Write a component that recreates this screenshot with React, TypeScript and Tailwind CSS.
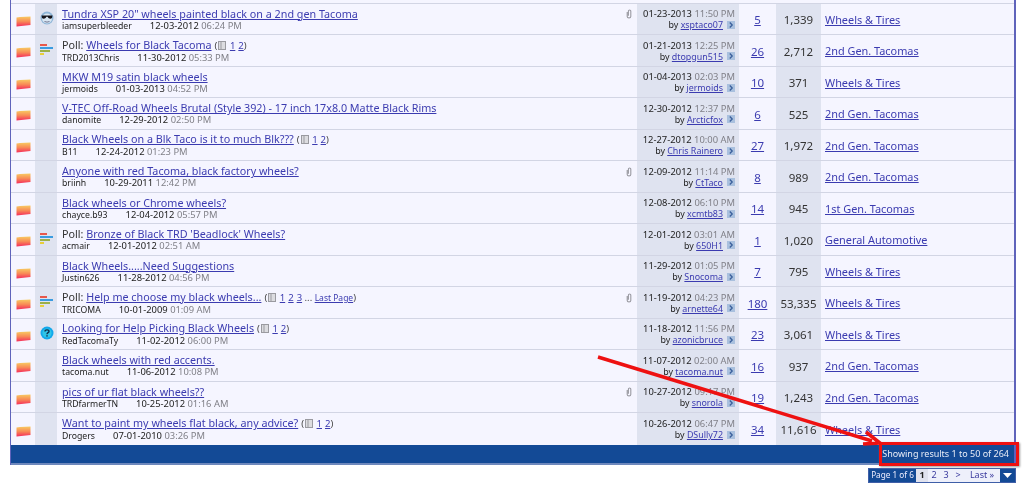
import React from "react";

type Row = {
  poll?: boolean; title: string; pages?: string[]; last?: boolean; user: string; d: string; t: string;
  clip?: boolean; ld: string; lt: string; by: string; replies: string; views: string; forum: string;
  icon?: "cool" | "poll" | "q";
};

const rows: Row[] = [
  { icon: "cool", title: 'Tundra XSP 20" wheels painted black on a 2nd gen Tacoma', user: "iamsuperbleeder", d: "12-03-2012", t: "06:24 PM", clip: true, ld: "01-23-2013", lt: "11:50 PM", by: "xsptaco07", replies: "5", views: "1,339", forum: "Wheels & Tires" },
  { icon: "poll", poll: true, title: "Wheels for Black Tacoma", pages: ["1", "2"], user: "TRD2013Chris", d: "11-30-2012", t: "05:33 PM", ld: "01-21-2013", lt: "12:25 PM", by: "dtopgun515", replies: "26", views: "2,712", forum: "2nd Gen. Tacomas" },
  { title: "MKW M19 satin black wheels", user: "jermoids", d: "01-03-2013", t: "04:52 PM", ld: "01-04-2013", lt: "02:03 PM", by: "jermoids", replies: "10", views: "371", forum: "Wheels & Tires" },
  { title: "V-TEC Off-Road Wheels Brutal (Style 392) - 17 inch 17x8.0 Matte Black Rims", user: "danomite", d: "12-29-2012", t: "02:50 PM", ld: "12-30-2012", lt: "12:37 PM", by: "Arcticfox", replies: "6", views: "525", forum: "2nd Gen. Tacomas" },
  { title: "Black Wheels on a Blk Taco is it to much Blk???", pages: ["1", "2"], user: "B11", d: "12-24-2012", t: "01:23 PM", ld: "12-27-2012", lt: "10:00 AM", by: "Chris Rainero", replies: "27", views: "1,972", forum: "2nd Gen. Tacomas" },
  { title: "Anyone with red Tacoma, black factory wheels?", user: "briinh", d: "10-29-2011", t: "12:42 PM", clip: true, ld: "12-09-2012", lt: "11:14 PM", by: "CtTaco", replies: "8", views: "989", forum: "2nd Gen. Tacomas" },
  { title: "Black wheels or Chrome wheels?", user: "chayce.b93", d: "12-04-2012", t: "05:57 PM", ld: "12-08-2012", lt: "06:10 PM", by: "xcmtb83", replies: "14", views: "945", forum: "1st Gen. Tacomas" },
  { icon: "poll", poll: true, title: "Bronze of Black TRD 'Beadlock' Wheels?", user: "acmair", d: "12-01-2012", t: "02:51 AM", ld: "12-01-2012", lt: "03:01 AM", by: "650H1", replies: "1", views: "1,020", forum: "General Automotive" },
  { title: "Black Wheels.....Need Suggestions", user: "Justin626", d: "11-28-2012", t: "04:56 PM", ld: "11-29-2012", lt: "01:05 PM", by: "Snocoma", replies: "7", views: "795", forum: "Wheels & Tires" },
  { icon: "poll", poll: true, title: "Help me choose my black wheels...", pages: ["1", "2", "3"], last: true, user: "TRICOMA", d: "10-01-2009", t: "01:09 AM", clip: true, ld: "11-19-2012", lt: "04:23 PM", by: "arnette64", replies: "180", views: "53,335", forum: "Wheels & Tires" },
  { icon: "q", title: "Looking for Help Picking Black Wheels", pages: ["1", "2"], user: "RedTacomaTy", d: "11-02-2012", t: "06:00 PM", ld: "11-18-2012", lt: "11:56 PM", by: "azonicbruce", replies: "23", views: "3,061", forum: "Wheels & Tires" },
  { title: "Black wheels with red accents.", user: "tacoma.nut", d: "11-06-2012", t: "10:08 PM", ld: "11-07-2012", lt: "02:00 AM", by: "tacoma.nut", replies: "16", views: "937", forum: "2nd Gen. Tacomas" },
  { title: "pics of ur flat black wheels??", user: "TRDfarmerTN", d: "10-25-2012", t: "01:16 AM", clip: true, ld: "10-27-2012", lt: "09:17 PM", by: "snorola", replies: "19", views: "1,243", forum: "2nd Gen. Tacomas" },
  { title: "Want to paint my wheels flat black, any advice?", pages: ["1", "2"], user: "Drogers", d: "07-01-2010", t: "03:26 PM", ld: "10-26-2012", lt: "06:47 PM", by: "DSully72", replies: "34", views: "11,616", forum: "Wheels & Tires" },
];

const linkCls = "text-[#3b3bb0] underline";

function Folder({ id }: { id: number }) {
  return (
    <svg width="15" height="11" viewBox="0 0 15 11">
      <defs>
        <linearGradient id={`f${id}`} x1="0" y1="0" x2="0" y2="1">
          <stop offset="0" stopColor="#f8cb62" />
          <stop offset="0.5" stopColor="#f88a56" />
          <stop offset="1" stopColor="#f52c5c" />
        </linearGradient>
      </defs>
      <path d="M0.5 1.5 L4 1 L14.5 0.5 L14.5 9 L0.5 10.5 Z" fill={`url(#f${id})`} />
    </svg>
  );
}

function PostIcon({ kind }: { kind?: Row["icon"] }) {
  if (kind === "poll")
    return (
      <svg width="13" height="12" viewBox="0 0 13 12">
        <rect x="0" y="0" width="7" height="2" fill="#e8584a" />
        <rect x="0" y="3" width="13" height="2" fill="#3a9be0" />
        <rect x="0" y="6" width="10" height="2" fill="#9bb04a" />
        <rect x="0" y="9" width="4" height="2" fill="#e8cf3a" />
      </svg>
    );
  if (kind === "q")
    return (
      <svg width="14" height="14" viewBox="0 0 14 14">
        <circle cx="7" cy="7" r="6.5" fill="#12a8ec" />
        <circle cx="7" cy="7" r="4.6" fill="#2fc5e8" />
        <path d="M5 5.4 C5 3.4 9 3.4 9 5.4 C9 6.8 7 6.6 7 8.2" fill="none" stroke="#103050" strokeWidth="1.4" />
        <rect x="6.3" y="9.2" width="1.4" height="1.4" fill="#103050" />
      </svg>
    );
  if (kind === "cool")
    return (
      <svg width="14" height="14" viewBox="0 0 14 14">
        <circle cx="7" cy="7" r="6.5" fill="#8fb6d8" />
        <circle cx="7" cy="7.5" r="5" fill="#d8e6f2" />
        <path d="M1.5 4.5 H12.5 L12 7 Q10.5 8.6 8.4 7 L7.6 5.8 H6.4 L5.6 7 Q3.5 8.6 2 7 Z" fill="#15151c" />
        <path d="M4.5 10.5 Q7 11.8 9.5 10.5" fill="none" stroke="#557" strokeWidth="0.8" />
      </svg>
    );
  return null;
}

function Clip() {
  return (
    <svg width="6" height="10" viewBox="0 0 6 10" className="shrink-0">
      <path d="M1.2 3 V7.6 C1.2 9.4 4.8 9.4 4.8 7.6 V2.2 C4.8 0.6 2.4 0.6 2.4 2.2 V6.8" fill="none" stroke="#9a9aa2" strokeWidth="1.1" />
    </svg>
  );
}

function GoIcon() {
  return (
    <svg width="8" height="8" viewBox="0 0 8 8" className="ml-[4px] shrink-0">
      <rect width="8" height="8" fill="#a9c0de" />
      <path d="M2.8 1.5 L5.2 4 L2.8 6.5" fill="none" stroke="#3a5f9c" strokeWidth="1.3" />
    </svg>
  );
}

function PagesIcon() {
  return (
    <svg width="8" height="9" viewBox="0 0 8 9" className="mx-px inline-block align-[-1px]">
      <rect x="0.5" y="0.5" width="7" height="8" fill="#dcdce0" stroke="#9a9aa0" />
      <path d="M3 0.5 V8.5" stroke="#9a9aa0" />
    </svg>
  );
}

function Pages({ r }: { r: Row }) {
  if (!r.pages) return null;
  return (
    <span className="ml-[3px] text-[9.5px] text-[#444]">
      (<PagesIcon />{" "}
      {r.pages.map((p, i) => (
        <span key={p} className={`${linkCls} ${i < r.pages!.length - 1 ? "mr-[3px]" : ""}`}>{p}</span>
      ))}
      {r.last && (
        <>
          {" "}... <span className={`${linkCls} text-[8.5px]`}>Last Page</span>
        </>
      )}
      )
    </span>
  );
}

function TableRow({ r, i, end }: { r: Row; i: number; end: boolean }) {
  return (
    <div className={`grid h-[31.5px] grid-cols-[24px_22px_580px_102px_37px_45px_193px] ${end ? "" : "border-b border-[#d2d5e4]"}`}>
      <div className="flex items-center justify-center bg-[#f5f5ff] pt-[5px]"><Folder id={i} /></div>
      <div className="flex items-center justify-center bg-[#dfe3f0] pb-[1px] pl-[1px]"><PostIcon kind={r.icon} /></div>
      <div className="flex items-center justify-between bg-[#f5f5ff] pl-[5px] pr-[5px]">
        <div className="pt-[2px] leading-[11px]">
          <div className="whitespace-nowrap text-[10.75px] leading-[12px] text-[#333]">
            {r.poll && "Poll: "}<span className={linkCls}>{r.title}</span><Pages r={r} />
          </div>
          <div className="flex items-baseline gap-[18px] whitespace-nowrap text-[9.4px] text-[#222]">
            <span className="text-[8.7px]">{r.user}</span>
            <span>{r.d} <span className="text-[#808088]">{r.t}</span></span>
          </div>
        </div>
        {r.clip && <div className="-mt-[9px]"><Clip /></div>}
      </div>
      <div className="flex flex-col items-end justify-center bg-[#dfe3f0] pr-[4px] pt-[1px] text-[9.4px] leading-[11px] text-[#222]">
        <div className="whitespace-nowrap">{r.ld} <span className="text-[#808088]">{r.lt}</span></div>
        <div className="flex items-center whitespace-nowrap text-[8.9px]">by&nbsp;<span className={linkCls}>{r.by}</span><GoIcon /></div>
      </div>
      <div className="flex items-center justify-center bg-[#f5f5ff] pt-[2px] text-[11.5px]"><span className={linkCls}>{r.replies}</span></div>
      <div className="flex items-center justify-center bg-[#dfe3f0] pt-[2px] text-[11.5px] text-[#333]">{r.views}</div>
      <div className="flex items-center bg-[#f5f5ff] pl-[4px] pt-[2px] text-[10.9px]"><span className={linkCls}>{r.forum}</span></div>
    </div>
  );
}

function Arrow() {
  return (
    <svg width="1023" height="491" viewBox="0 0 1023 491" className="pointer-events-none absolute left-0 top-0">
      <path d="M598 357 L872 441" stroke="#ee1111" strokeWidth="3.5" />
      <path d="M866 432 L880 443 L863 444" fill="none" stroke="#ee1111" strokeWidth="3.5" />
    </svg>
  );
}

export default function App() {
  return (
    <div className="relative h-[491px] w-[1023px] overflow-hidden bg-white font-['Noto_Sans',sans-serif] blur-[0.3px]">
      <div className="ml-[10px] w-[1006px] border-l border-r-2 border-[#5f63bb]">
        <div className="h-[3.5px] border-b border-[#d2d5e4] bg-[#f5f5ff]" />
        {rows.map((r, i) => (
          <TableRow key={i} r={r} i={i} end={i === rows.length - 1} />
        ))}
        <div className="flex h-[20px] items-center justify-end border-b-2 border-[#6e88bc] bg-[#134a96] pr-[5px] text-[9px] text-[#e8ecf6]">
          Showing results 1 to 50 of 264
        </div>
      </div>
      <div className="ml-[868px] mt-[3px] flex h-[15px] w-[148px] items-stretch whitespace-nowrap border border-[#3f5fa8] bg-[#eef0fb] text-[9px] text-[#3a3a9e]">
        <div className="flex w-[47px] items-center justify-center bg-[#134a96] text-[8.2px] text-[#eef]">Page 1 of 6</div>
        <div className="flex w-[12px] items-center justify-center bg-[#e0e2ee] font-bold text-[#222]">1</div>
        <div className="flex w-[12px] items-center justify-center">2</div>
        <div className="flex w-[12px] items-center justify-center">3</div>
        <div className="flex w-[12px] items-center justify-center">&gt;</div>
        <div className="flex flex-1 items-center justify-center">Last »</div>
        <div className="flex w-[15px] items-center justify-center bg-[#134a96]">
          <svg width="9" height="5" viewBox="0 0 9 5"><path d="M0 0 H9 L4.5 5 Z" fill="#fff" /></svg>
        </div>
      </div>
      <Arrow />
      <div className="absolute left-[879px] top-[442px] h-[24px] w-[140px] border-[3px] border-[#ee1111] shadow-[1px_1px_2px_#999]" />
    </div>
  );
}
